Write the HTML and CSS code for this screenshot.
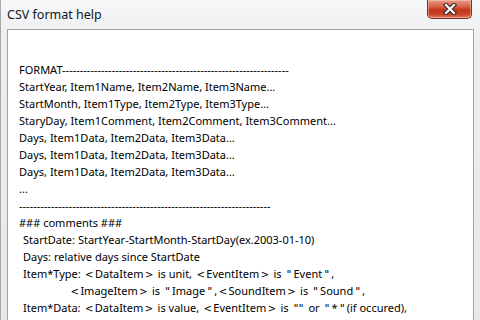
FILE: index.html
```html
<!DOCTYPE html>
<html>
<head>
<meta charset="utf-8">
<link rel="stylesheet" href="styles.css">
</head>
<body>
<div class="window">
  <div class="titlebar">
    <span class="title">CSV format help</span>
    <div class="close">
      <svg width="16" height="12" viewBox="0 0 16 12">
        <path d="M4 2 L12 10 M12 2 L4 10" stroke="#3a2a28" stroke-width="4.4" stroke-linecap="square"/>
        <path d="M4 2 L12 10 M12 2 L4 10" stroke="#ffffff" stroke-width="2.2" stroke-linecap="square"/>
      </svg>
    </div>
  </div>
  <div class="content">
    <div class="line">FORMAT----------------------------------------------------------------</div>
    <div class="line">StartYear, Item1Name, Item2Name, Item3Name...</div>
    <div class="line">StartMonth, Item1Type, Item2Type, Item3Type...</div>
    <div class="line">StaryDay, Item1Comment, Item2Comment, Item3Comment...</div>
    <div class="line">Days, Item1Data, Item2Data, Item3Data...</div>
    <div class="line">Days, Item1Data, Item2Data, Item3Data...</div>
    <div class="line">Days, Item1Data, Item2Data, Item3Data...</div>
    <div class="line">...</div>
    <div class="line">-----------------------------------------------------------------------</div>
    <div class="line">### comments ###</div>
    <div class="line sub">StartDate: StartYear-StartMonth-StartDay(ex.2003-01-10)</div>
    <div class="line sub">Days: relative days since StartDate</div>
    <div class="line sub">Item*Type: <span class="g">&lt;</span>DataItem<span class="g">&gt;</span> is unit, <span class="g">&lt;</span>EventItem<span class="g">&gt;</span> is <span class="q">"</span>Event<span class="q">"</span>,</div>
    <div class="line deep"><span class="g">&lt;</span>ImageItem<span class="g">&gt;</span> is <span class="q">"</span>Image<span class="q">"</span>,<span class="g">&lt;</span>SoundItem<span class="g">&gt;</span> is <span class="q">"</span>Sound<span class="q">"</span>,</div>
    <div class="line sub">Item*Data: <span class="g">&lt;</span>DataItem<span class="g">&gt;</span> is value, <span class="g">&lt;</span>EventItem<span class="g">&gt;</span> is <span class="q">""</span> or <span class="q">"</span>*<span class="q">"</span>(if occured),</div>
    <div class="line deep2"><span class="g">&lt;</span>ImageItem<span class="g">&gt;</span> is <span class="q">"</span>path of image file<span class="q">"</span>, <span class="g">&lt;</span>SoundItem<span class="g">&gt;</span> is <span class="q">"</span>path of sound file<span class="q">"</span>,</div>
  </div>
</div>
</body>
</html>
```
FILE: styles.css
```css
html, body {
  margin: 0;
  padding: 0;
}
body {
  width: 480px;
  height: 320px;
  overflow: hidden;
  font-family: "Noto Sans", "Open Sans", "Noto Sans CJK SC", sans-serif;
  color: #000;
}
.window {
  width: 480px;
  height: 320px;
  box-sizing: border-box;
  display: flex;
  flex-direction: column;
  background: linear-gradient(#f6f7f9, #eceef0 40px, #e6e8ea);
  border-left: 1px solid #a8a8a8;
}
.titlebar {
  height: 29px;
  flex: none;
  display: flex;
  align-items: flex-start;
}
.title {
  font-size: 12.5px;
  line-height: 14px;
  margin-top: 8px;
  margin-left: 6px;
  color: #101820;
}
.close {
  margin-left: auto;
  margin-right: 8px;
  width: 43px;
  height: 18px;
  border: 1px solid #7a3024;
  border-top: none;
  border-radius: 0 0 5px 5px;
  background: linear-gradient(#e89a86 0%, #d8654a 35%, #c2341a 55%, #c94328 80%, #e08064 100%);
  display: flex;
  align-items: center;
  justify-content: center;
  box-shadow: inset 0 0 0 1px rgba(255, 220, 200, 0.45);
}
.close svg {
  display: block;
}
.content {
  flex: 1;
  margin: 0 6px 0 6px;
  border: 1px solid #a3a3a3;
  border-bottom: none;
  background: #fff;
  padding: 31px 0 0 11px;
  font-size: 11px;
  line-height: 17px;
  white-space: nowrap;
  overflow: hidden;
}
.line {
  height: 17px;
}
.sub {
  padding-left: 4px;
}
.deep {
  padding-left: 50px;
}
.deep2 {
  padding-left: 140px;
}
.g {
  font-family: "DejaVu Sans", sans-serif;
  font-size: 10px;
  padding: 0 1.5px;
}
.q {
  font-family: "DejaVu Sans", sans-serif;
  padding: 0 2px;
}
```
